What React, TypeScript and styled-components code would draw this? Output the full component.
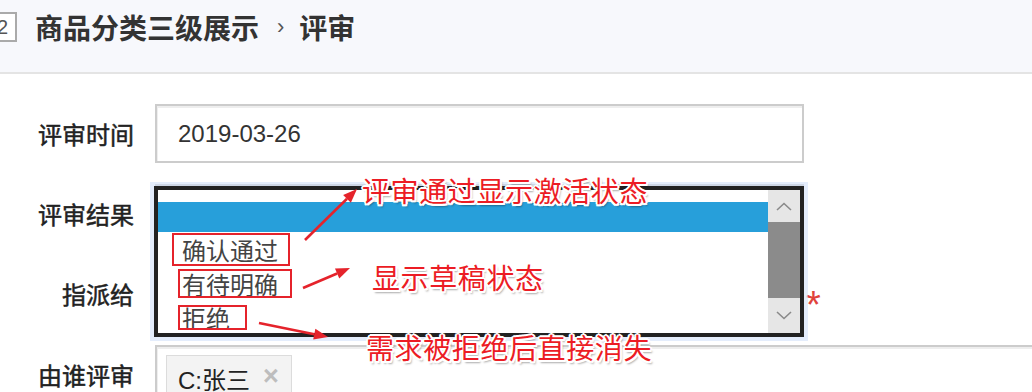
import styled, { createGlobalStyle } from 'styled-components';

const GlobalStyle = createGlobalStyle`
  html, body {
    margin: 0;
    padding: 0;
    background: #fff;
  }
  body {
    font-family: "Liberation Sans", "Noto Sans CJK SC", sans-serif;
    color: #333;
  }
`;

const Page = styled.div`
  position: relative;
  width: 1032px;
  height: 392px;
  overflow: hidden;
  background: #fff;
`;

const Header = styled.header`
  display: flex;
  align-items: flex-start;
  height: 74px;
  padding-top: 12px;
  box-sizing: border-box;
  background: #f7f8fc;
  border-bottom: 2px solid #e4e4e4;
`;

const IdBox = styled.span`
  display: flex;
  align-items: center;
  justify-content: center;
  width: 29px;
  height: 30px;
  margin-left: -12px;
  box-sizing: border-box;
  border: 2px solid #aaa;
  background: #fff;
  font-size: 20px;
  color: #555;
`;

const Title = styled.h1`
  display: flex;
  align-items: center;
  margin: 0 0 0 18px;
  font-family: "Noto Sans CJK SC", sans-serif;
  font-size: 28px;
  line-height: 30px;
  font-weight: 700;
  color: #333;
`;

const Sep = styled.span`
  margin: 0 15px 0 18px;
  font-family: "Liberation Sans", sans-serif;
  font-size: 22px;
  font-weight: 400;
  color: #555;
`;

const Form = styled.form`
  display: grid;
  grid-template-columns: 134px 1fr;
  column-gap: 21px;
  row-gap: 21px;
  padding-top: 30px;
`;

const Label = styled.label`
  display: flex;
  align-items: center;
  justify-content: flex-end;
  height: 59px;
  font-family: "Noto Sans CJK SC", sans-serif;
  font-size: 24px;
  color: #222;
  -webkit-text-stroke: 0.5px #222;
  white-space: nowrap;
`;

const Field = styled.div`
  display: flex;
  align-items: flex-start;
  min-width: 0;
`;

const Input = styled.div<{ $width: number }>`
  display: flex;
  align-items: center;
  width: ${(p) => p.$width}px;
  height: 59px;
  flex-shrink: 0;
  box-sizing: border-box;
  padding-left: 21px;
  border: 2px solid #cccccc;
  box-shadow: inset 1px 2px 0 #eeeeee;
  background: #fff;
  font-size: 24px;
  color: #333;
`;

const TagBox = styled(Input)`
  align-items: flex-start;
  padding: 8px 0 0 9px;
`;

const Tag = styled.span`
  display: flex;
  align-items: center;
  gap: 13px;
  height: 44px;
  padding: 0 12px 0 11px;
  border: 1px solid #dcdcdc;
  background: #f3f3f3;
  font-size: 24px;
  color: #222;
`;

const TagClose = styled.span`
  font-size: 27px;
  font-weight: 700;
  line-height: 1;
  color: #bdbdbd;
  margin-top: -4px;
`;

const Required = styled.span`
  margin: 22px 0 0 2px;
  font-family: "Liberation Sans", sans-serif;
  font-size: 38px;
  line-height: 38px;
  color: #e0433c;
`;

const ListBox = styled.div`
  position: absolute;
  left: 154px;
  top: 186px;
  width: 650px;
  height: 151px;
  box-sizing: border-box;
  display: flex;
  border: 4px solid #222;
  background: #fff;
  box-shadow: 0 0 0 4px rgba(205, 222, 250, 0.55);
`;

const Options = styled.ul`
  flex: 1;
  margin: 0;
  padding: 12px 0 0;
  list-style: none;
  overflow: hidden;
`;

const Option = styled.li<{ $selected?: boolean }>`
  display: flex;
  align-items: center;
  height: ${(p) => (p.$selected ? 30 : 34)}px;
  padding-left: 24px;
  background: ${(p) => (p.$selected ? '#279fda' : 'transparent')};
  font-family: "Noto Sans CJK SC", sans-serif;
  font-size: 24px;
  color: #444;
`;

const ScrollBar = styled.div`
  display: flex;
  flex-direction: column;
  width: 32px;
  background: #e6e6e6;
`;

const ScrollButton = styled.div<{ $height: number }>`
  display: flex;
  align-items: center;
  justify-content: center;
  height: ${(p) => p.$height}px;
  background: #e6e6e6;
`;

const Thumb = styled.div`
  height: 76px;
  background: #8b8b8b;
`;

const Mark = styled.div<{ $x: number; $y: number; $w: number; $h: number }>`
  position: absolute;
  left: ${(p) => p.$x}px;
  top: ${(p) => p.$y}px;
  width: ${(p) => p.$w}px;
  height: ${(p) => p.$h}px;
  box-sizing: border-box;
  border: 2px solid #e5232b;
`;

const Note = styled.div<{ $x: number; $y: number }>`
  position: absolute;
  left: ${(p) => p.$x}px;
  top: ${(p) => p.$y}px;
  font-family: "Noto Sans CJK SC", sans-serif;
  font-size: 28px;
  line-height: 28px;
  letter-spacing: 0.6px;
  white-space: nowrap;
  color: #ec1c24;
  text-shadow: -1.5px -1.5px 0 #fff, 1.5px -1.5px 0 #fff, -1.5px 1.5px 0 #fff,
    1.5px 1.5px 0 #fff, 0 -2px 0 #fff, 0 2px 0 #fff, -2px 0 0 #fff, 2px 0 0 #fff,
    2px 3px 2px rgba(0, 0, 0, 0.35);
`;

const ArrowLayer = styled.svg`
  position: absolute;
  left: 0;
  top: 0;
  pointer-events: none;
`;

const arrows = [
  { x1: 305, y1: 240, x2: 357, y2: 189 },
  { x1: 303, y1: 288, x2: 350, y2: 268 },
  { x1: 259, y1: 323, x2: 328, y2: 337 },
];

function Arrow({ x1, y1, x2, y2 }: { x1: number; y1: number; x2: number; y2: number }) {
  const a = Math.atan2(y2 - y1, x2 - x1);
  const len = 14;
  const half = 5.5;
  const bx = x2 - len * Math.cos(a);
  const by = y2 - len * Math.sin(a);
  const px = -Math.sin(a) * half;
  const py = Math.cos(a) * half;
  return (
    <g>
      <line x1={x1} y1={y1} x2={bx} y2={by} stroke="#e5232b" strokeWidth={2.6} />
      <polygon
        points={`${x2},${y2} ${bx + px},${by + py} ${bx - px},${by - py}`}
        fill="#e5232b"
      />
    </g>
  );
}

export default function App() {
  return (
    <Page>
      <GlobalStyle />
      <Header>
        <IdBox>2</IdBox>
        <Title>
          商品分类三级展示<Sep>›</Sep>评审
        </Title>
      </Header>

      <Form>
        <Label>评审时间</Label>
        <Field>
          <Input $width={649}>2019-03-26</Input>
        </Field>

        <Label>评审结果</Label>
        <Field>
          <Input $width={649} />
        </Field>

        <Label>指派给</Label>
        <Field>
          <Input $width={649} />
          <Required>*</Required>
        </Field>

        <Label>由谁评审</Label>
        <Field>
          <TagBox $width={1000}>
            <Tag>
              C:张三<TagClose>×</TagClose>
            </Tag>
          </TagBox>
        </Field>
      </Form>

      <ListBox>
        <Options>
          <Option $selected />
          <Option>确认通过</Option>
          <Option>有待明确</Option>
          <Option>拒绝</Option>
        </Options>
        <ScrollBar>
          <ScrollButton $height={32}>
            <svg width="16" height="9" viewBox="0 0 16 9">
              <polyline points="1,8 8,1.5 15,8" fill="none" stroke="#8a8a8a" strokeWidth="1.6" />
            </svg>
          </ScrollButton>
          <Thumb />
          <ScrollButton $height={35}>
            <svg width="16" height="9" viewBox="0 0 16 9">
              <polyline points="1,1 8,7.5 15,1" fill="none" stroke="#8a8a8a" strokeWidth="1.6" />
            </svg>
          </ScrollButton>
        </ScrollBar>
      </ListBox>

      <Mark $x={172} $y={233} $w={118} $h={33} />
      <Mark $x={178} $y={269} $w={114} $h={29} />
      <Mark $x={178} $y={305} $w={69} $h={25} />

      <ArrowLayer width={1032} height={392}>
        {arrows.map((a, i) => (
          <Arrow key={i} {...a} />
        ))}
      </ArrowLayer>

      <Note $x={362} $y={176}>评审通过显示激活状态</Note>
      <Note $x={372} $y={263}>显示草稿状态</Note>
      <Note $x={366} $y={333}>需求被拒绝后直接消失</Note>
    </Page>
  );
}
